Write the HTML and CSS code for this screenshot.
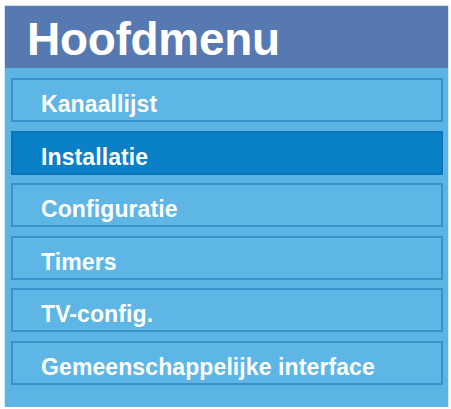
FILE: index.html
```html
<!DOCTYPE html>
<html>
<head>
<meta charset="utf-8">
<link rel="stylesheet" href="styles.css">
</head>
<body>
<div class="panel">
  <div class="header">Hoofdmenu</div>
  <div class="list">
    <div class="item">Kanaallijst</div>
    <div class="item selected">Installatie</div>
    <div class="item">Configuratie</div>
    <div class="item">Timers</div>
    <div class="item">TV-config.</div>
    <div class="item">Gemeenschappelijke interface</div>
  </div>
</div>
</body>
</html>
```
FILE: styles.css
```css
html, body {
  margin: 0;
  padding: 0;
  background: #ffffff;
}
.panel {
  margin: 6px 0 0 5px;
  width: 443px;
  height: 401px;
  background: #5bb4e4;
  box-sizing: border-box;
  box-shadow: 0 0 0 1px #cfe6f3;
  font-family: "Liberation Sans", Arial, sans-serif;
  font-weight: bold;
  color: #ffffff;
}
.header {
  height: 62px;
  background: #5779b2;
  font-size: 46px;
  line-height: 62px;
  padding-top: 2px;
  box-sizing: border-box;
  padding-left: 22px;
  letter-spacing: -0.3px;
}
.list {
  display: grid;
  gap: 8.6px;
  padding: 10px 5px 0 6px;
}
.item {
  height: 44px;
  box-sizing: border-box;
  border: 2px solid #3a92cb;
  background: #5db6e6;
  font-size: 23px;
  line-height: 42px;
  padding-top: 3px;
  padding-left: 28px;
  letter-spacing: 0.1px;
}
.item.selected {
  background: #0a80c7;
  border-color: #0a74b8;
}
```
